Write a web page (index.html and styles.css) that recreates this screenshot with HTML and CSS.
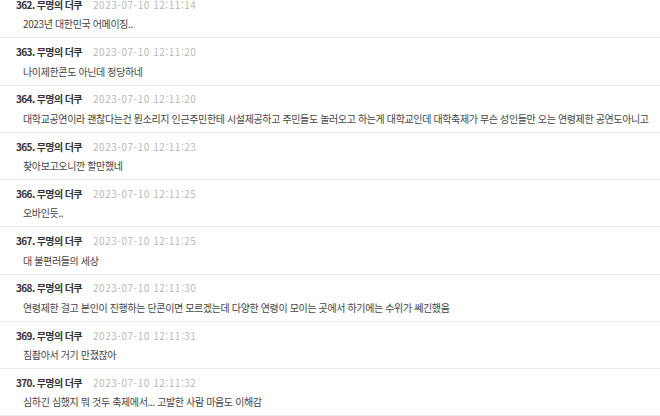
FILE: index.html
```html
<!DOCTYPE html>
<html lang="ko">
<head>
  <meta charset="UTF-8">
  <meta name="viewport" content="width=device-width, initial-scale=1.0">
  <title>댓글</title>
  <link rel="stylesheet" href="styles.css">
</head>
<body>

  <ul class="comments">
    <li>
      <div class="head"><span class="who">362. 무명의 더쿠</span><span class="date">2023-07-10 12:11:14</span></div>
      <div class="text">2023년 대한민국 어메이징..</div>
    </li>
    <li>
      <div class="head"><span class="who">363. 무명의 더쿠</span><span class="date">2023-07-10 12:11:20</span></div>
      <div class="text">나이제한콘도 아닌데 정당하네</div>
    </li>
    <li>
      <div class="head"><span class="who">364. 무명의 더쿠</span><span class="date">2023-07-10 12:11:20</span></div>
      <div class="text">대학교공연이라 괜찮다는건 뭔소리지 인근주민한테 시설제공하고 주민들도 놀러오고 하는게 대학교인데 대학축제가 무슨 성인들만 오는 연령제한 공연도아니고</div>
    </li>
    <li>
      <div class="head"><span class="who">365. 무명의 더쿠</span><span class="date">2023-07-10 12:11:23</span></div>
      <div class="text">찾아보고오니깐 할만했네</div>
    </li>
    <li>
      <div class="head"><span class="who">366. 무명의 더쿠</span><span class="date">2023-07-10 12:11:25</span></div>
      <div class="text">오바인듯..</div>
    </li>
    <li>
      <div class="head"><span class="who">367. 무명의 더쿠</span><span class="date">2023-07-10 12:11:25</span></div>
      <div class="text">대 불편러들의 세상</div>
    </li>
    <li>
      <div class="head"><span class="who">368. 무명의 더쿠</span><span class="date">2023-07-10 12:11:30</span></div>
      <div class="text">연령제한 걸고 본인이 진행하는 단콘이면 모르겠는데 다양한 연령이 모이는 곳에서 하기에는 수위가 쎄긴했음</div>
    </li>
    <li>
      <div class="head"><span class="who">369. 무명의 더쿠</span><span class="date">2023-07-10 12:11:31</span></div>
      <div class="text">침촵아서 거기 만졌잖아</div>
    </li>
    <li>
      <div class="head"><span class="who">370. 무명의 더쿠</span><span class="date">2023-07-10 12:11:32</span></div>
      <div class="text">심하긴 심했지 뭐 것두 축제에서... 고발한 사람 마음도 이해감</div>
    </li>
  </ul>

</body>
</html>
```

FILE: styles.css
```css
body {
  font-family: 'Noto Sans CJK KR', 'Noto Sans', sans-serif;
  background-color: #fff;
  color: #333;
  margin: 0;
  padding: 0;
  overflow: hidden;
}

.comments {
  list-style-type: none;
  margin: -9px 0 0 0;
  padding: 0;
}

.comments li {
  padding: 5.25px 0 5px 16px;
  border-bottom: 1px solid #ececec;
}

.head {
  display: flex;
  align-items: center;
  height: 16px;
  font-size: 10px;
}

.who {
  font-weight: bold;
  color: #333;
  letter-spacing: -0.6px;
}

.date {
  margin-left: 11px;
  font-size: 10px;
  letter-spacing: 0.55px;
  color: #b9b9b9;
}

.text {
  margin-top: 4px;
  padding-left: 7px;
  height: 16px;
  line-height: 16px;
  font-size: 10px;
  letter-spacing: -0.37px;
  color: #444;
  white-space: nowrap;
}
```
